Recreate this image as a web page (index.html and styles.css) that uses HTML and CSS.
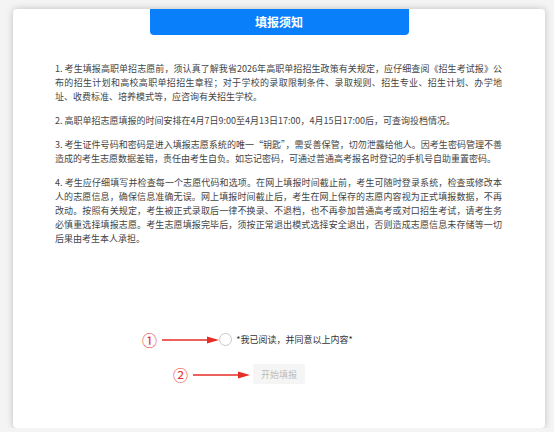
FILE: index.html
```html
<!DOCTYPE html>
<html lang="zh-CN">
<head>
  <meta charset="UTF-8" />
  <meta name="viewport" content="width=device-width, initial-scale=1.0"/>
  <title>填报须知</title>
  <link rel="stylesheet" href="styles.css">
</head>
<body>

  <div class="page">
    <div class="card">
      <div class="tab">填报须知</div>

      <div class="notice">
        <p>1. 考生填报高职单招志愿前，须认真了解我省2026年高职单招招生政策有关规定，应仔细查阅《招生考试报》公布的招生计划和高校高职单招招生章程；对于学校的录取限制条件、录取规则、招生专业、招生计划、办学地址、收费标准、培养模式等，应咨询有关招生学校。</p>
        <p>2. 高职单招志愿填报的时间安排在4月7日9:00至4月13日17:00，4月15日17:00后，可查询投档情况。</p>
        <p>3. 考生证件号码和密码是进入填报志愿系统的唯一“钥匙”，需妥善保管，切勿泄露给他人。因考生密码管理不善造成的考生志愿数据差错，责任由考生自负。如忘记密码，可通过普通高考报名时登记的手机号自助重置密码。</p>
        <p>4. 考生应仔细填写并检查每一个志愿代码和选项。在网上填报时间截止前，考生可随时登录系统，检查或修改本人的志愿信息，确保信息准确无误。网上填报时间截止后，考生在网上保存的志愿内容视为正式填报数据，不再改动。按照有关规定，考生被正式录取后一律不换录、不退档，也不再参加普通高考或对口招生考试，请考生务必慎重选择填报志愿。考生志愿填报完毕后，须按正常退出模式选择安全退出，否则造成志愿信息未存储等一切后果由考生本人承担。</p>
      </div>

      <div class="agree">
        <label class="agree-row">
          <span class="radio"></span>
          <span>*我已阅读，并同意以上内容*</span>
        </label>
        <button class="start" disabled>开始填报</button>

        <!-- 标注 -->
        <div class="mark mark-1">
          <span class="num">①</span>
          <svg width="57" height="8" viewBox="0 0 57 8"><line x1="0" y1="4" x2="49" y2="4" stroke="#e62d26" stroke-width="1.6"/><path d="M45 0.5 L57 4 L45 7.5 Z" fill="#e62d26"/></svg>
        </div>
        <div class="mark mark-2">
          <span class="num">②</span>
          <svg width="57" height="8" viewBox="0 0 57 8"><line x1="0" y1="4" x2="49" y2="4" stroke="#e62d26" stroke-width="1.6"/><path d="M45 0.5 L57 4 L45 7.5 Z" fill="#e62d26"/></svg>
        </div>
      </div>
    </div>
  </div>

</body>
</html>
```

FILE: styles.css
```css
body {
  margin: 0;
  background-color: #f4f4f4;
  font-family: "Noto Sans CJK SC", "Noto Sans", sans-serif;
}

.page {
  padding: 9px 9px 0 13px;
}

.card {
  height: 419px;
  background-color: #fff;
  border-radius: 4px;
  box-shadow: 0 0 7px rgba(0,0,0,0.22);
  display: flex;
  flex-direction: column;
}

.tab {
  align-self: center;
  width: 259px;
  height: 26px;
  line-height: 26px;
  background-color: #0a7ffa;
  color: #fff;
  font-size: 12px;
  font-weight: bold;
  text-align: center;
  border-radius: 0 0 4px 4px;
}

.notice {
  padding: 27px 43px 0 42px;
  color: #444;
  font-size: 9px;
  line-height: 14px;
  text-align: justify;
}

.notice p {
  margin: 0 0 10px;
}

.agree {
  position: relative;
  margin-top: 77px;
  display: flex;
  flex-direction: column;
  align-items: center;
}

.agree-row {
  display: flex;
  align-items: center;
  gap: 4px;
  margin-left: 14px;
  font-size: 9px;
  color: #333;
}

.radio {
  box-sizing: border-box;
  width: 13px;
  height: 13px;
  border: 1px solid #c8c8c8;
  border-radius: 50%;
  background-color: #fff;
}

.start {
  margin-top: 18px;
  width: 52px;
  height: 20px;
  padding: 0;
  border: none;
  border-radius: 2px;
  background-color: #f5f5f5;
  color: #bdbdbd;
  font-family: inherit;
  font-size: 9px;
}

.mark {
  position: absolute;
  display: flex;
  align-items: center;
  gap: 5px;
}

.mark .num {
  color: #e62d26;
  font-size: 15px;
  line-height: 1;
}

.mark-1 {
  left: 129px;
  top: -1px;
}

.mark-2 {
  left: 160px;
  top: 34px;
}
```
